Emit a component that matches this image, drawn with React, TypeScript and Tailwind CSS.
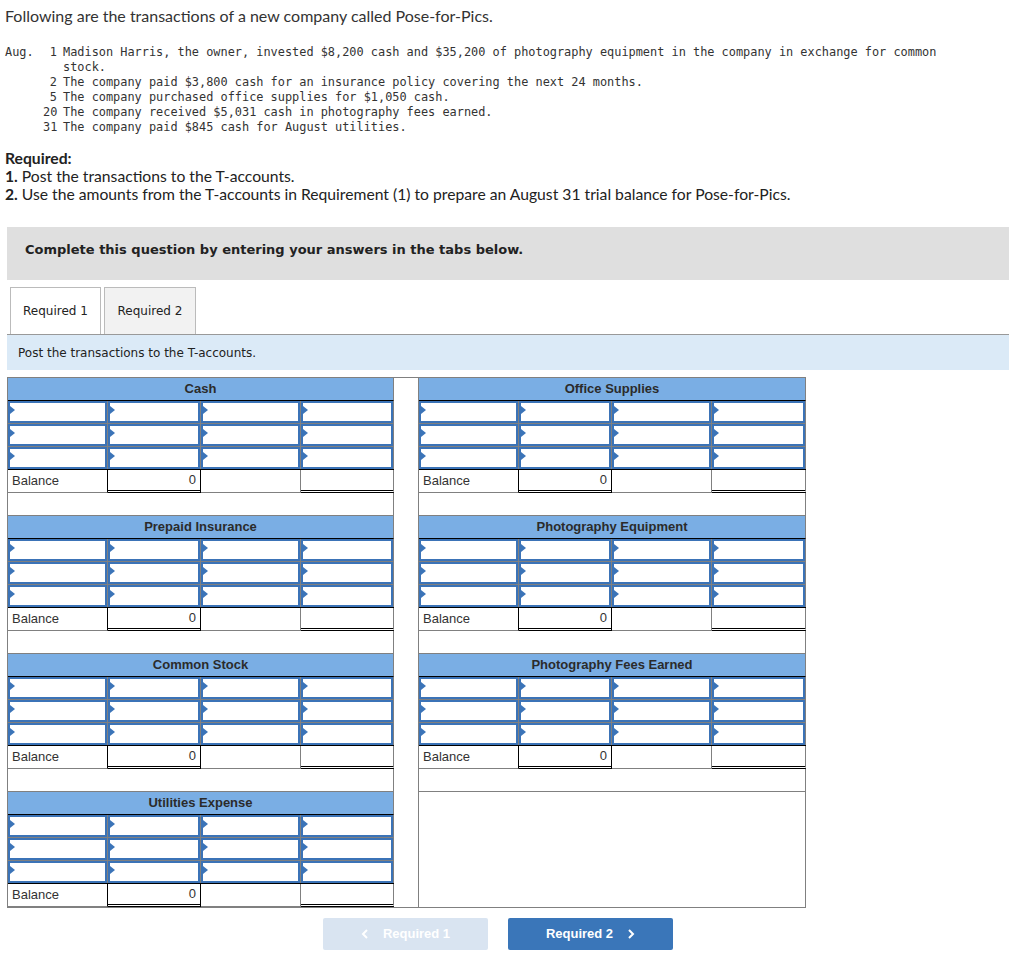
import React from "react";

const sans = { fontFamily: "Lato, 'Open Sans', sans-serif" };

function Tri() {
  return (
    <span className="absolute left-0 top-[3px] h-0 w-0 border-y-[4px] border-y-transparent border-l-[5px] border-l-[#3b74b8]" />
  );
}

function InputRow({ widths, lastBlack }: { widths: string[]; lastBlack?: boolean }) {
  return (
    <div className={`flex h-[23px] border-b ${lastBlack ? "border-black" : "border-[#808080]"}`}>
      {widths.map((w, i) => (
        <div key={i} className={`${w} h-full border-r border-[#808080]`}>
          <div className="relative h-full border-2 border-[#3b73b7] bg-white">
            <Tri />
          </div>
        </div>
      ))}
    </div>
  );
}

function TAccount({
  title,
  widths,
  blank,
}: {
  title: string;
  widths: string[];
  blank?: boolean;
}) {
  return (
    <div className="flex flex-col">
      <div className="flex h-[23px] items-center justify-center border-r border-b border-r-[#808080] border-b-black bg-[#7aaee4] text-[13px] font-bold text-[#2b2b2b]">
        {title}
      </div>
      <InputRow widths={widths} />
      <InputRow widths={widths} />
      <InputRow widths={widths} lastBlack />
      <div className="flex h-[23px] text-[13px] text-[#333]">
        <div className={`${widths[0]} flex items-center border-r border-b border-r-black border-b-[#808080] pl-[4px]`}>
          Balance
        </div>
        <div className={`${widths[1]} flex items-center justify-end border-r border-b-[3px] border-r-black border-b-black [border-bottom-style:double] pr-[4px]`}>
          0
        </div>
        <div className={`${widths[2]} border-r border-b border-[#808080]`} />
        <div className={`${widths[3]} border-r border-b-[3px] border-r-[#808080] border-b-black [border-bottom-style:double]`} />
      </div>
      {blank && <div className="h-[23px] border-r border-b border-[#808080]" />}
    </div>
  );
}

export default function App() {
  const L = ["w-[100px]", "w-[93px]", "w-[100px]", "w-[93px]"];
  const R = ["w-[100px]", "w-[93px]", "w-[100px]", "w-[94px]"];
  return (
    <div className="min-h-[971px] w-[1013px] bg-white text-[#333]" style={{ fontFamily: "'Liberation Sans', Arial, sans-serif" }}>
      <p className="pl-[5px] pt-[6px] text-[16px] leading-[20px] text-[#333]" style={sans}>
        Following are the transactions of a new company called Pose-for-Pics.
      </p>

      <div
        className="mt-[19px] grid grid-cols-[32px_14px_auto] gap-x-[6px] pl-[5px] text-[11.9px] leading-[15px] text-[#333]"
        style={{ fontFamily: "'DejaVu Sans Mono', 'Liberation Mono', monospace" }}
      >
        <div>Aug.</div>
        <div className="text-right">1</div>
        <div>
          Madison Harris, the owner, invested $8,200 cash and $35,200 of photography equipment in the company in exchange for common
          <br />
          stock.
        </div>
        <div />
        <div className="text-right">2</div>
        <div>The company paid $3,800 cash for an insurance policy covering the next 24 months.</div>
        <div />
        <div className="text-right">5</div>
        <div>The company purchased office supplies for $1,050 cash.</div>
        <div />
        <div className="text-right">20</div>
        <div>The company received $5,031 cash in photography fees earned.</div>
        <div />
        <div className="text-right">31</div>
        <div>The company paid $845 cash for August utilities.</div>
      </div>

      <div className="mt-[14px] pl-[5px] text-[15.7px] leading-[18px] text-[#222]" style={sans}>
        <div className="font-bold">Required:</div>
        <div>
          <span className="font-bold">1.</span> Post the transactions to the T-accounts.
        </div>
        <div>
          <span className="font-bold">2.</span> Use the amounts from the T-accounts in Requirement (1) to prepare an August 31 trial balance for Pose-for-Pics.
        </div>
      </div>

      <div className="ml-[7px] mr-[4px] mt-[24px]" style={{ fontFamily: "'DejaVu Sans', Verdana, sans-serif" }}>
        <div className="flex h-[53px] items-center bg-[#dfdfdf] pb-[8px] pl-[18px] text-[13px] font-bold text-[#222]">
          Complete this question by entering your answers in the tabs below.
        </div>
        <div className="mt-[8px] flex h-[47px] items-end gap-[3px] border-b border-[#999] pl-[3px]">
          <div className="flex h-[47px] w-[91px] items-center justify-center border border-b-0 border-[#bbb] bg-white text-[12px] text-[#222]">
            Required 1
          </div>
          <div className="flex h-[47px] w-[92px] items-center justify-center border border-b-0 border-[#bbb] bg-[#f2f2f2] text-[12px] text-[#222]">
            Required 2
          </div>
        </div>
        <div className="flex h-[35px] items-center bg-[#dbeaf7] pl-[11px] text-[12px] text-[#222]">
          Post the transactions to the T-accounts.
        </div>
      </div>

      <div className="ml-[7px] mt-[7px] flex w-[799px] border-t border-b border-l border-[#808080]">
        <div className="flex w-[386px] flex-col">
          <TAccount title="Cash" widths={L} blank />
          <TAccount title="Prepaid Insurance" widths={L} blank />
          <TAccount title="Common Stock" widths={L} blank />
          <TAccount title="Utilities Expense" widths={L} />
        </div>
        <div className="w-[25px] border-r border-[#808080]" />
        <div className="flex w-[387px] flex-col">
          <TAccount title="Office Supplies" widths={R} blank />
          <TAccount title="Photography Equipment" widths={R} blank />
          <TAccount title="Photography Fees Earned" widths={R} blank />
          <div className="flex-1 border-r border-[#808080]" />
        </div>
      </div>

      <div className="ml-[323px] mt-[10px] flex gap-[20px]">
        <button className="flex h-[32px] w-[165px] items-center justify-center gap-[14px] rounded-[2px] bg-[#d9e4f1] text-[13px] font-bold text-white">
          <svg width="8" height="12" viewBox="0 0 8 12" fill="none" stroke="white" strokeWidth="2">
            <polyline points="6,2 2,6 6,10" />
          </svg>
          Required 1
        </button>
        <button className="flex h-[32px] w-[165px] items-center justify-center gap-[14px] rounded-[2px] bg-[#3a76b9] text-[13px] font-bold text-white">
          Required 2
          <svg width="8" height="12" viewBox="0 0 8 12" fill="none" stroke="white" strokeWidth="2">
            <polyline points="2,2 6,6 2,10" />
          </svg>
        </button>
      </div>
    </div>
  );
}
